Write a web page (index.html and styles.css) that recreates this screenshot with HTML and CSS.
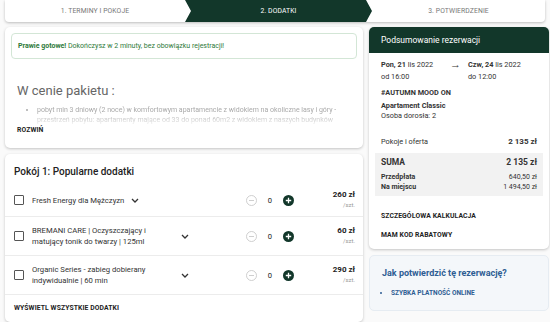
FILE: index.html
```html
<!DOCTYPE html>
<html lang="pl">
<head>
    <meta charset="UTF-8">
    <meta name="viewport" content="width=device-width, initial-scale=1.0">
    <title>Rezerwacja - dodatki</title>
    <link rel="stylesheet" href="styles.css">
</head>
<body>
    <div class="steps">
        <div class="step step-first">1. TERMINY I POKOJE</div>
        <div class="step step-active">2. DODATKI</div>
        <div class="step step-last">3. POTWIERDZENIE</div>
    </div>

    <div class="layout">
        <div class="col-main">
            <div class="card card-package">
                <div class="alert"><b>Prawie gotowe!</b> Dokończysz w 2 minuty, bez obowiązku rejestracji!</div>
                <h2 class="package-title">W cenie pakietu :</h2>
                <ul class="package-list">
                    <li>pobyt min 3 dniowy (2 noce) w komfortowym apartamencie z widokiem na okoliczne lasy i góry - przestrzeń pobytu: apartamenty mające od 33 do ponad 60m2 z widokiem z naszych budynków</li>
                </ul>
                <a class="link-bold" href="#">ROZWIŃ</a>
            </div>

            <div class="card card-extras">
                <h3 class="extras-title">Pokój 1: Popularne dodatki</h3>

                <div class="extra-row">
                    <span class="checkbox"></span>
                    <div class="extra-name">
                        <span class="extra-text">Fresh Energy dla Mężczyzn</span>
                        <svg class="chevron" width="8" height="5" viewBox="0 0 8 5"><polyline points="1,1 4,4 7,1" fill="none" stroke="#333" stroke-width="1.3"/></svg>
                    </div>
                    <div class="counter">
                        <svg class="btn-minus" width="11" height="11" viewBox="0 0 11 11"><circle cx="5.5" cy="5.5" r="5" fill="none" stroke="#c9c9c9" stroke-width="0.9"/><line x1="3" y1="5.5" x2="8" y2="5.5" stroke="#c9c9c9" stroke-width="0.9"/></svg>
                        <span class="count">0</span>
                        <svg class="btn-plus" width="11" height="11" viewBox="0 0 11 11"><circle cx="5.5" cy="5.5" r="5.5" fill="#12372a"/><path d="M5.5 2.8v5.4M2.8 5.5h5.4" stroke="#fff" stroke-width="1.3"/></svg>
                    </div>
                    <div class="price"><b>260 zł</b><span>/szt.</span></div>
                </div>

                <div class="extra-row">
                    <span class="checkbox"></span>
                    <div class="extra-name">
                        <span class="extra-text wrap">BREMANI CARE | Oczyszczający i matujący tonik do twarzy | 125ml</span>
                        <svg class="chevron" width="8" height="5" viewBox="0 0 8 5"><polyline points="1,1 4,4 7,1" fill="none" stroke="#333" stroke-width="1.3"/></svg>
                    </div>
                    <div class="counter">
                        <svg class="btn-minus" width="11" height="11" viewBox="0 0 11 11"><circle cx="5.5" cy="5.5" r="5" fill="none" stroke="#c9c9c9" stroke-width="0.9"/><line x1="3" y1="5.5" x2="8" y2="5.5" stroke="#c9c9c9" stroke-width="0.9"/></svg>
                        <span class="count">0</span>
                        <svg class="btn-plus" width="11" height="11" viewBox="0 0 11 11"><circle cx="5.5" cy="5.5" r="5.5" fill="#12372a"/><path d="M5.5 2.8v5.4M2.8 5.5h5.4" stroke="#fff" stroke-width="1.3"/></svg>
                    </div>
                    <div class="price"><b>60 zł</b><span>/szt.</span></div>
                </div>

                <div class="extra-row">
                    <span class="checkbox"></span>
                    <div class="extra-name">
                        <span class="extra-text wrap">Organic Series - zabieg dobierany indywidualnie | 60 min</span>
                        <svg class="chevron" width="8" height="5" viewBox="0 0 8 5"><polyline points="1,1 4,4 7,1" fill="none" stroke="#333" stroke-width="1.3"/></svg>
                    </div>
                    <div class="counter">
                        <svg class="btn-minus" width="11" height="11" viewBox="0 0 11 11"><circle cx="5.5" cy="5.5" r="5" fill="none" stroke="#c9c9c9" stroke-width="0.9"/><line x1="3" y1="5.5" x2="8" y2="5.5" stroke="#c9c9c9" stroke-width="0.9"/></svg>
                        <span class="count">0</span>
                        <svg class="btn-plus" width="11" height="11" viewBox="0 0 11 11"><circle cx="5.5" cy="5.5" r="5.5" fill="#12372a"/><path d="M5.5 2.8v5.4M2.8 5.5h5.4" stroke="#fff" stroke-width="1.3"/></svg>
                    </div>
                    <div class="price"><b>290 zł</b><span>/szt.</span></div>
                </div>

                <div class="extras-footer">
                    <a class="link-bold" href="#">WYŚWIETL WSZYSTKIE DODATKI</a>
                </div>
            </div>
        </div>

        <div class="col-side">
            <div class="card card-summary">
                <div class="summary-head">Podsumowanie rezerwacji</div>
                <div class="summary-body">
                    <div class="dates">
                        <div class="date-col">
                            <div><b>Pon, 21</b> lis 2022</div>
                            <div>od 16:00</div>
                        </div>
                        <div class="date-arrow">&rarr;</div>
                        <div class="date-col">
                            <div><b>Czw, 24</b> lis 2022</div>
                            <div>do 12:00</div>
                        </div>
                    </div>
                    <div class="offer-name">#AUTUMN MOOD ON</div>
                    <div class="room">
                        <b>Apartament Classic</b>
                        <div>Osoba dorosła: 2</div>
                    </div>
                    <div class="line-item">
                        <span>Pokoje i oferta</span>
                        <b>2 135 zł</b>
                    </div>
                    <div class="total">
                        <div class="total-main">
                            <span>SUMA</span>
                            <span>2 135 zł</span>
                        </div>
                        <div class="total-sub">
                            <b>Przedpłata</b>
                            <span>640,50 zł</span>
                        </div>
                        <div class="total-sub">
                            <b>Na miejscu</b>
                            <span>1 494,50 zł</span>
                        </div>
                    </div>
                    <a class="link-bold side-link" href="#">SZCZEGÓŁOWA KALKULACJA</a>
                    <a class="link-bold side-link" href="#">MAM KOD RABATOWY</a>
                </div>
            </div>

            <div class="confirm-box">
                <h3>Jak potwierdzić tę rezerwację?</h3>
                <ul>
                    <li>SZYBKA PŁATNOŚĆ ONLINE</li>
                </ul>
            </div>
        </div>
    </div>
</body>
</html>
```

FILE: styles.css
```css
body {
    margin: 0;
    padding: 0 5px;
    background: #fafafa;
    color: #222;
    font-family: Roboto, "Noto Sans", sans-serif;
    font-size: 7px;
}

a {
    text-decoration: none;
}

/* stepper */
.steps {
    display: flex;
    height: 22px;
    background: white;
    border-radius: 0 0 4px 4px;
    box-shadow: 0 1px 3px rgba(0, 0, 0, 0.25);
}

.step {
    display: flex;
    align-items: center;
    justify-content: center;
    font-size: 6.8px;
    color: #777;
    letter-spacing: 0.1px;
}

.step-first {
    width: 180px;
}

.step-active {
    width: 187px;
    background: #12372a;
    color: white;
    clip-path: polygon(0 0, calc(100% - 6px) 0, 100% 50%, calc(100% - 6px) 100%, 0 100%, 6px 50%);
}

.step-last {
    flex: 1;
}

/* layout */
.layout {
    display: grid;
    grid-template-columns: 358px 1fr;
    gap: 6px;
    margin-top: 5px;
}

.col-main,
.col-side {
    display: flex;
    flex-direction: column;
    gap: 6px;
}

.card {
    background: white;
    border-radius: 5px;
    box-shadow: 0 1px 3px rgba(0, 0, 0, 0.22);
}

/* package card */
.card-package {
    padding: 6px 6px 14px;
}

.alert {
    height: 24px;
    line-height: 24px;
    padding: 0 6px;
    border: 1px solid #d3e6d6;
    border-radius: 4px;
    color: #2e7a3a;
    font-size: 7px;
}

.alert b {
    font-weight: 700;
}

.package-title {
    margin: 24px 0 0 6px;
    font-size: 13px;
    line-height: 16px;
    font-weight: 400;
    color: #666;
}

.package-list {
    margin: 6px 0 0;
    padding: 0 20px 0 26px;
    height: 20px;
    overflow: hidden;
    color: #aaa;
    font-size: 7px;
    line-height: 10px;
    -webkit-mask-image: linear-gradient(to bottom, black 40%, rgba(0, 0, 0, 0.15) 100%);
    mask-image: linear-gradient(to bottom, black 40%, rgba(0, 0, 0, 0.15) 100%);
}

.link-bold {
    display: block;
    color: #222;
    font-weight: 700;
    font-size: 6.8px;
    letter-spacing: 0.1px;
}

.card-package .link-bold {
    margin: 1px 0 0 6px;
}

/* extras card */
.extras-title {
    margin: 0;
    padding: 12px 9px 6px;
    font-size: 10px;
    line-height: 12px;
    font-weight: 500;
    color: #222;
}

.extra-row {
    display: flex;
    align-items: center;
    padding: 6px 8px 6px 9px;
    border-bottom: 1px solid #ececec;
}

.extra-row + .extra-row {
    padding: 8px 8px 8px 9px;
}

.checkbox {
    width: 8px;
    height: 8px;
    border: 1px solid #555;
    border-radius: 1px;
    flex-shrink: 0;
}

.extra-name {
    flex: 1;
    display: flex;
    align-items: center;
    margin-left: 8px;
}

.extra-text {
    font-size: 7.7px;
    line-height: 11px;
    color: #333;
}

.extra-text.wrap {
    width: 142px;
}

.chevron {
    margin-left: 7px;
}

.counter {
    display: flex;
    align-items: center;
    gap: 6px;
}

.count {
    width: 14px;
    text-align: center;
    font-size: 7.6px;
}

.price {
    width: 52px;
    margin-left: 9px;
    display: flex;
    flex-direction: column;
    align-items: flex-end;
    line-height: 10px;
}

.price b {
    font-size: 8px;
    font-weight: 700;
}

.price span {
    font-size: 6px;
    color: #999;
}

.extras-footer {
    padding: 9px 9px 10px;
}

/* summary */
.summary-head {
    height: 26px;
    display: flex;
    align-items: center;
    padding: 0 12px;
    background: #12372a;
    color: white;
    font-size: 8.5px;
    border-radius: 5px 5px 0 0;
}

.summary-body {
    padding: 6px 6px 10px;
    font-size: 7.3px;
    color: #333;
}

.dates {
    display: flex;
    align-items: flex-start;
    padding: 0 6px;
    line-height: 12px;
}

.date-col {
    width: 69px;
}

.date-col b {
    font-weight: 700;
}

.date-arrow {
    width: 18px;
    font-size: 11px;
    line-height: 11px;
}

.offer-name {
    margin-top: 4px;
    padding: 0 6px;
    font-weight: 700;
    line-height: 12px;
}

.room {
    margin-top: 2px;
    padding: 0 6px;
    line-height: 10px;
}

.line-item {
    display: flex;
    justify-content: space-between;
    margin-top: 16px;
    padding: 0 6px;
    line-height: 10px;
}

.line-item b {
    font-size: 8px;
}

.total {
    margin-top: 6px;
    padding: 3px 6px 4px;
    background: #f2f2f2;
}

.total-main {
    display: flex;
    justify-content: space-between;
    font-size: 8.5px;
    font-weight: 700;
    line-height: 12px;
    margin-bottom: 4px;
}

.total-sub {
    display: flex;
    justify-content: space-between;
    font-size: 7px;
    line-height: 10px;
}

.side-link {
    margin: 16px 6px 0;
}

.side-link + .side-link {
    margin-top: 11px;
}

/* confirm */
.confirm-box {
    padding: 12px 12px 13px;
    background: #f4f7fa;
    border: 1px solid #e6ecf2;
    border-radius: 5px;
}

.confirm-box h3 {
    margin: 0;
    font-size: 9px;
    font-weight: 700;
    color: #2e5d93;
}

.confirm-box ul {
    margin: 11px 0 0;
    padding-left: 9px;
    color: #2e5d93;
    font-size: 6.5px;
    font-weight: 700;
}
```
